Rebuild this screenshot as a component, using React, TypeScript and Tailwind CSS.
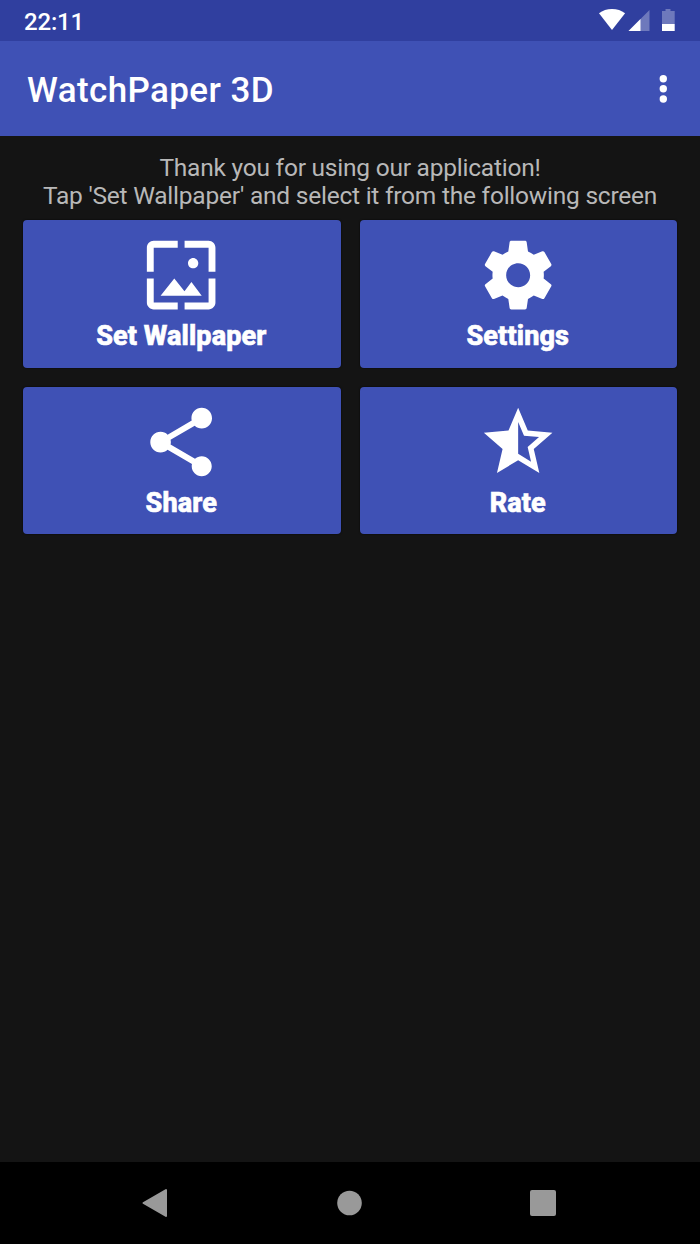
import React from 'react';

const actions = [
    {
        label: 'Set Wallpaper',
        path: 'M4 4h7V2H4c-1.1 0-2 .9-2 2v7h2V4zm6 9l-4 5h12l-3-4-2.03 2.71L10 13zm7-4.5c0-.83-.67-1.5-1.5-1.5S14 7.67 14 8.5s.67 1.5 1.5 1.5S17 9.33 17 8.5zM20 2h-7v2h7v7h2V4c0-1.1-.9-2-2-2zm0 18h-7v2h7c1.1 0 2-.9 2-2v-7h-2v7zM4 13H2v7c0 1.1.9 2 2 2h7v-2H4v-7z',
    },
    {
        label: 'Settings',
        path: 'M19.43 12.98c.04-.32.07-.64.07-.98s-.03-.66-.07-.98l2.11-1.65c.19-.15.24-.42.12-.64l-2-3.46c-.12-.22-.39-.3-.61-.22l-2.49 1c-.52-.4-1.08-.73-1.69-.98l-.38-2.65C14.46 2.18 14.25 2 14 2h-4c-.25 0-.46.18-.49.42l-.38 2.65c-.61.25-1.17.59-1.69.98l-2.49-1c-.23-.09-.49 0-.61.22l-2 3.46c-.13.22-.07.49.12.64l2.11 1.65c-.04.32-.07.65-.07.98s.03.66.07.98l-2.11 1.65c-.19.15-.24.42-.12.64l2 3.46c.12.22.39.3.61.22l2.49-1c.52.4 1.08.73 1.69.98l.38 2.65c.03.24.24.42.49.42h4c.25 0 .46-.18.49-.42l.38-2.65c.61-.25 1.17-.59 1.69-.98l2.49 1c.23.09.49 0 .61-.22l2-3.46c.12-.22.07-.49-.12-.64l-2.11-1.65zM12 15.5c-1.93 0-3.5-1.57-3.5-3.5s1.57-3.5 3.5-3.5 3.5 1.57 3.5 3.5-1.57 3.5-3.5 3.5z',
    },
    {
        label: 'Share',
        path: 'M18 16.08c-.76 0-1.44.3-1.96.77L8.91 12.7c.05-.23.09-.46.09-.7s-.04-.47-.09-.7l7.05-4.11c.54.5 1.25.81 2.04.81 1.66 0 3-1.34 3-3s-1.34-3-3-3-3 1.34-3 3c0 .24.04.47.09.7L8.04 9.81C7.5 9.31 6.79 9 6 9c-1.66 0-3 1.34-3 3s1.34 3 3 3c.79 0 1.5-.31 2.04-.81l7.12 4.16c-.05.21-.08.43-.08.65 0 1.61 1.31 2.92 2.92 2.92 1.61 0 2.92-1.31 2.92-2.92s-1.31-2.92-2.92-2.92z',
    },
    {
        label: 'Rate',
        path: 'M22 9.24l-7.19-.62L12 2 9.19 8.63 2 9.24l5.46 4.73L5.82 21 12 17.27 18.18 21l-1.63-7.03L22 9.24zM12 15.4V6.1l1.71 4.04 4.38.38-3.32 2.88 1 4.28L12 15.4z',
    },
];

const StatusIcons: React.FC = () => (
    <svg width="80" height="24" viewBox="0 0 80 24" fill="#fff" className="-mt-px">
        {/* wifi */}
        <path d="M0 5.200C3.600 2.400 8 .9 13 .9s9.400 1.500 13.100 4.300L13 22z" />
        {/* signal */}
        <path d="M50.500 2v21H29.500z" fillOpacity="0.3" />
        <path d="M41.500 11v12h-12z" />
        {/* battery */}
        <path d="M66.500 1h5v2h4.200v13H63V3h3.500z" fillOpacity="0.3" />
        <path d="M63 16h12.700v7H63z" />
    </svg>
);

const App: React.FC = () => {
    return (
        <div className="flex h-[1244px] w-[700px] flex-col overflow-hidden bg-[#141414] font-['Roboto',sans-serif]">
            <div className="flex h-[41px] items-center justify-between bg-[#303f9f] pr-[21px] pb-px pl-6 text-white">
                <span className="pt-[3px] text-[24px] leading-none font-medium tracking-[-0.2px]">22:11</span>
                <StatusIcons />
            </div>

            <header className="flex h-[95px] items-center justify-between bg-[#3f51b5] pr-[33.500px] pl-[27px] text-white">
                <h1 className="pt-[3px] text-[35px] leading-none font-medium tracking-[0.4px]">WatchPaper 3D</h1>
                <svg width="8" height="30" viewBox="0 0 8 30" fill="currentColor">
                    <circle cx="4.300" cy="4.700" r="3.700" />
                    <circle cx="4.300" cy="14.800" r="3.700" />
                    <circle cx="4.300" cy="25" r="3.700" />
                </svg>
            </header>

            <main className="flex-1 px-[23px] pt-[18px]">
                <p className="h-[66px] text-center text-[24.500px] leading-[28px] tracking-[-0.23px] whitespace-nowrap text-[#b8b8b8]">
                    Thank you for using our application!
                    <br />
                    Tap 'Set Wallpaper' and select it from the following screen
                </p>
                <div className="grid grid-cols-2 gap-[19px]">
                    {actions.map((action) => (
                        <button
                            key={action.label}
                            className="flex h-[147.500px] flex-col items-center rounded-[4px] bg-[#3f51b5] pt-[14px] text-white shadow-[0_0_2px_rgba(0,0,0,0.8)]"
                        >
                            <svg width="82.300" height="82.300" viewBox="0 0 24 24" fill="currentColor" className="mr-px">
                                <path d={action.path} />
                            </svg>
                            <span className="mt-1 mr-px text-[27px] leading-[32px] font-extrabold tracking-[0.1px] [-webkit-text-stroke:0.6px_white]">
                                {action.label}
                            </span>
                        </button>
                    ))}
                </div>
            </main>

            <nav className="flex h-[82px] items-center justify-center bg-black text-[#999]">
                <svg width="416" height="30" viewBox="0 0 416 30" fill="currentColor">
                    <path d="M1.500 15L24 2v26z" stroke="currentColor" strokeWidth="2" strokeLinejoin="round" />
                    <circle cx="207.500" cy="15" r="12.300" />
                    <rect x="388" y="2" width="26" height="26" rx="2" />
                </svg>
            </nav>
        </div>
    );
};

export default App;
